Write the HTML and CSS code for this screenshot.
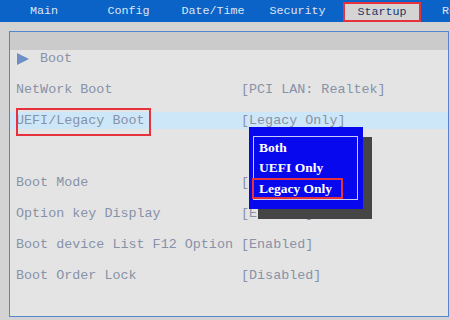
FILE: index.html
```html
<!doctype html>
<html>
<head>
<meta charset="utf-8">
<link rel="stylesheet" href="styles.css">
</head>
<body>
	<div class="tabs">
		<div class="tab">Main</div>
		<div class="tab">Config</div>
		<div class="tab">Date/Time</div>
		<div class="tab">Security</div>
		<div class="tab active">Startup</div>
		<div class="tab">Restart</div>
	</div>
	<div class="panel">
		<div class="panel-head"></div>
		<div class="panel-body">
			<div class="row title"><span class="arrow"></span>Boot</div>
			<div class="row"><span>NetWork Boot</span><span>[PCI LAN: Realtek]</span></div>
			<div class="row cur"><span class="mark">UEFI/Legacy Boot</span><span>[Legacy Only]</span></div>
			<div class="row"></div>
			<div class="row"><span>Boot Mode</span><span>[Quick]</span></div>
			<div class="row"><span>Option key Display</span><span>[Enabled]</span></div>
			<div class="row"><span>Boot device List F12 Option</span><span>[Enabled]</span></div>
			<div class="row"><span>Boot Order Lock</span><span>[Disabled]</span></div>

			<div class="popup">
				<div class="popup-inner">
					<div class="opt">Both</div>
					<div class="opt">UEFI Only</div>
					<div class="opt sel">Legacy Only</div>
				</div>
			</div>
		</div>
	</div>
</body>
</html>
```

FILE: styles.css
```css
*{
	margin:0;
	padding:0;
	box-sizing:border-box;
}
body{
	background:#d3d3d3;
	font-family:"Liberation Mono", monospace;
	width:450px;
	height:320px;
	overflow:hidden;
}
.tabs{
	display:flex;
	gap:6.5px;
	height:22px;
	padding-left:5px;
	background:#0b63c8;
	overflow:hidden;
}
.tab{
	flex:0 0 78px;
	text-align:center;
	line-height:22px;
	font-size:11.7px;
	color:#dde6f1;
}
.tab.active{
	margin-top:2px;
	height:20px;
	line-height:16px;
	background:#d4d4d4;
	color:#1d3869;
	border:2px solid #e5323c;
}
.panel{
	margin:9px 1px 0 9px;
	height:286px;
	border:1px solid #5486cf;
	background:#e4e4e4;
}
.panel-head{
	height:18px;
	background:#cbcbcb;
}
.panel-body{
	position:relative;
	display:flex;
	flex-direction:column;
	gap:14px;
}
.row{
	display:grid;
	grid-template-columns:225px 1fr;
	height:17px;
	line-height:17px;
	padding-left:6px;
	font-size:13.4px;
	color:#8792a8;
	white-space:nowrap;
}
.row.title{
	display:flex;
	align-items:center;
	padding-left:7px;
}
.arrow{
	width:0;
	height:0;
	border-top:6px solid transparent;
	border-bottom:6px solid transparent;
	border-left:12px solid #6e8ec6;
	margin-right:11px;
}
.row.cur{
	background:#cde7f8;
}
.mark{
	position:relative;
}
.mark::after{
	content:"";
	position:absolute;
	left:0;
	top:-4px;
	width:131px;
	height:24px;
	border:2px solid #e5323c;
}
.popup{
	position:absolute;
	left:239px;
	top:77px;
	width:114px;
	height:82px;
	padding:9px 5px 9px 4px;
	background:#0808ef;
	box-shadow:9px 10px 0 #454545;
}
.popup-inner{
	border:1px solid #c9cdf5;
	height:64px;
	padding-top:1px;
}
.opt{
	height:20px;
	line-height:20px;
	padding-left:5px;
	font-family:"Liberation Serif", serif;
	font-weight:bold;
	font-size:13.5px;
	color:#fff;
}
.opt.sel{
	width:91px;
	height:21px;
	line-height:17px;
	margin-left:-2px;
	padding-left:5px;
	border:2px solid #e5323c;
}
```
